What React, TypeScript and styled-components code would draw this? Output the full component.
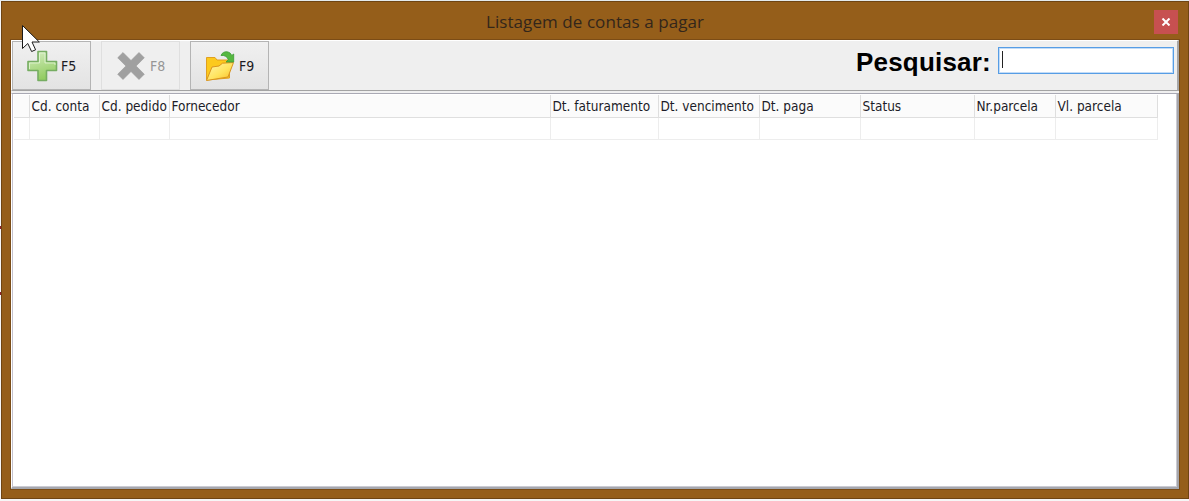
import React from "react";
import styled, { createGlobalStyle } from "styled-components";

const GlobalStyle = createGlobalStyle`
  * { box-sizing: border-box; }
  html, body { margin: 0; padding: 0; background: #f4f5f6; overflow: hidden; }
`;

const Desktop = styled.div`
  position: relative;
  width: 1189px;
  height: 501px;
  padding: 1px 0 2px 1px;
  background: linear-gradient(#e4ebec 0 1px, #f6f6f6 1px);
`;

const Mark = styled.i<{ $top: number }>`
  position: absolute;
  left: 0;
  top: ${(p) => p.$top}px;
  width: 1px;
  height: 3px;
  background: #8e1f2c;
`;

const Window = styled.div`
  display: flex;
  flex-direction: column;
  width: 1188px;
  height: 498px;
  padding: 0 9px 0 8px;
  background: #955e1a;
  border: 1px solid #6f4513;
`;

const TitleBar = styled.header`
  display: grid;
  grid-template-columns: 1fr auto 1fr;
  height: 37px;
  flex: none;
`;

const Title = styled.h1`
  grid-column: 2;
  margin: 0 0 0 1px;
  padding-top: 8px;
  width: 218px;
  white-space: nowrap;
  font: 400 17px/24px "Open Sans", sans-serif;
  letter-spacing: 0.07px;
  color: #33261a;
`;

const CloseButton = styled.button`
  justify-self: end;
  display: grid;
  place-items: center;
  width: 24px;
  height: 24px;
  margin: 8px 1px 0 0;
  padding: 0;
  border: 0;
  background: #c75050;
`;

const Client = styled.main`
  display: flex;
  flex-direction: column;
  flex: 1;
  min-height: 0;
  margin-bottom: 8px;
  margin-right: -1px;
  border: 1px solid #7b4c16;
  background: #efefef;
`;

const Toolbar = styled.div`
  display: flex;
  align-items: flex-start;
  height: 51px;
  flex: none;
  padding: 0 3px 0 0;
  gap: 10px;
  border-top: 1px solid #fff;
  border-left: 1px solid #fff;
  border-right: 2px solid #a6a6a8;
  border-bottom: 1px solid #a3a3a3;
  background: #efefef;
`;

const ToolButton = styled.button<{ $off?: boolean }>`
  display: flex;
  align-items: center;
  width: 79px;
  height: 49px;
  padding: 1px 0 0 13px;
  gap: 3px;
  font: 14px/16px "DejaVu Sans Condensed", "DejaVu Sans", sans-serif;
  color: ${(p) => (p.$off ? "#969696" : "#1c1c24")};
  background: ${(p) => (p.$off ? "#efefef" : "linear-gradient(#f0f0f0, #e3e3e3)")};
  border: 1px solid ${(p) => (p.$off ? "#dfdfdf" : "#b4b4b4")};
  svg { flex: none; }
`;

const Search = styled.label`
  display: flex;
  align-items: flex-start;
  margin-left: auto;
  gap: 7px;
  padding-top: 6px;
`;

const SearchLabel = styled.span`
  width: 135px;
  white-space: nowrap;
  font: 700 26px/30px "Liberation Sans", Arial, sans-serif;
  letter-spacing: 0.2px;
  color: #000;
`;

const Field = styled.span`
  display: block;
  width: 176px;
  height: 27px;
  padding: 3px 0 0 3px;
  background: #fff;
  border: 1px solid #569de5;
  box-shadow: inset 0 0 0 1px #c3dcf7;
`;

const Caret = styled.span`
  display: block;
  width: 1px;
  height: 17px;
  background: #222;
`;

const GridFrame = styled.section`
  flex: 1;
  margin-top: 2px;
  border-top: 1px solid #a9a9b4;
  border-left: 1px solid #fff;
  border-right: 2px solid #a5a5aa;
  border-bottom: 2px solid #a5a7ae;
  background: #fff;
`;

const GridBody = styled.div`
  height: 100%;
  padding: 1px 0 0 1px;
  border: 1px solid #cbcbd2;
  border-left: 1px solid #c4c2ce;
  border-top: 0;
`;

const Row = styled.div<{ $head?: boolean }>`
  display: flex;
  height: ${(p) => (p.$head ? 23 : 22)}px;
  width: 1144px;
  background: ${(p) => (p.$head ? "#fbfbfb" : "#fff")};
  border-bottom: 1px solid ${(p) => (p.$head ? "#dfdfdf" : "#ededed")};
`;

const Cell = styled.div<{ $w: number; $head?: boolean }>`
  width: ${(p) => p.$w}px;
  flex: none;
  padding-left: 1.5px;
  border-right: 1px solid ${(p) => (p.$head ? "#dedede" : "#ededed")};
  font: 13.5px/23px "DejaVu Sans Condensed", "DejaVu Sans", sans-serif;
  color: #1c1c28;
  white-space: nowrap;
`;

const Pointer = styled.svg`
  position: absolute;
  left: 22px;
  top: 24px;
`;

const columns: { label: string; width: number }[] = [
  { label: "", width: 16 },
  { label: "Cd. conta", width: 70 },
  { label: "Cd. pedido", width: 70 },
  { label: "Fornecedor", width: 381 },
  { label: "Dt. faturamento", width: 108 },
  { label: "Dt. vencimento", width: 101 },
  { label: "Dt. paga", width: 101 },
  { label: "Status", width: 114 },
  { label: "Nr.parcela", width: 81 },
  { label: "Vl. parcela", width: 102 },
];

const PlusIcon = () => (
  <svg width="32" height="32" viewBox="0 0 32 32">
    <defs>
      <linearGradient id="plus" x1="0" y1="0" x2="0.3" y2="1">
        <stop offset="0" stopColor="#d9efc6" />
        <stop offset="0.5" stopColor="#b4dd92" />
        <stop offset="1" stopColor="#93cc62" />
      </linearGradient>
    </defs>
    <path d="M12 1.500h8.500v10h10v9h-10v10h-8.500v-10h-10v-9h10z" fill="url(#plus)" stroke="#76ad62" strokeWidth="1.600" strokeLinejoin="round" />
    <path d="M3.500 19v-6h10v-10h5.500v10h10v2" fill="none" stroke="#e4f5d8" strokeWidth="0.800" />
  </svg>
);

const CrossIcon = () => (
  <svg width="32" height="32" viewBox="0 0 32 32">
    <path d="M8 2.500l8 8 8-8 5.300 5.300-8.200 8.200 8.200 8.200-5.300 5.300-8-8-8 8-5.300-5.300 8.200-8.200-8.200-8.200z" fill="#a0a0a0" stroke="#999" strokeWidth="0.600" strokeLinejoin="round" />
  </svg>
);

const FolderIcon = () => (
  <svg width="32" height="32" viewBox="0 0 32 32">
    <defs>
      <linearGradient id="flap" x1="0" y1="0" x2="1" y2="1">
        <stop offset="0" stopColor="#fff6ad" />
        <stop offset="0.55" stopColor="#ffe45f" />
        <stop offset="1" stopColor="#f9ba21" />
      </linearGradient>
    </defs>
    <path d="M2.500 30V7.500h8.500l2 2.500h12.500v18z" fill="#fcc91d" stroke="#e0a020" strokeLinejoin="round" />
    <path d="M2.500 30.500l5.500-13.500 7-1 3.500-2.800 11-.7-5.500 14.500z" fill="url(#flap)" stroke="#d9941f" strokeLinejoin="round" />
    <path d="M17 5.500c1-2.800 3.500-4 6-3.700 2.600.3 4.200 2 4.700 3.700l2-1.500v8h-7.700l2.300-2.300c-.8-3-3.800-4.700-7.300-4.200z" fill="#55b83f" stroke="#3c9a36" strokeWidth="0.800" strokeLinejoin="round" />
  </svg>
);

export default function App() {
  return (
    <Desktop>
      <GlobalStyle />
      <Mark $top={226} />
      <Mark $top={292} />
      <Window>
        <TitleBar>
          <Title>Listagem de contas a pagar</Title>
          <CloseButton aria-label="Fechar">
            <svg width="10" height="8" viewBox="0 0 10 8">
              <path d="M1.500 0.500l7 7M8.500 0.500l-7 7" stroke="#fff" strokeWidth="2" />
            </svg>
          </CloseButton>
        </TitleBar>
        <Client>
          <Toolbar>
            <ToolButton><PlusIcon />F5</ToolButton>
            <ToolButton $off><CrossIcon />F8</ToolButton>
            <ToolButton><FolderIcon />F9</ToolButton>
            <Search>
              <SearchLabel>Pesquisar:</SearchLabel>
              <Field><Caret /></Field>
            </Search>
          </Toolbar>
          <GridFrame>
            <GridBody>
              <Row $head>
                {columns.map((c, i) => (
                  <Cell key={i} $w={c.width} $head>{c.label}</Cell>
                ))}
              </Row>
              <Row>
                {columns.map((c, i) => (
                  <Cell key={i} $w={c.width} />
                ))}
              </Row>
            </GridBody>
          </GridFrame>
        </Client>
      </Window>
      <Pointer width="19" height="29" viewBox="0 0 19 29">
        <path d="M0.500 1.500v23l5.300-5 3.800 8 4-1.700-3.600-7.800h7.300z" fill="#fff" stroke="#1a1a1a" strokeWidth="1" />
      </Pointer>
    </Desktop>
  );
}
